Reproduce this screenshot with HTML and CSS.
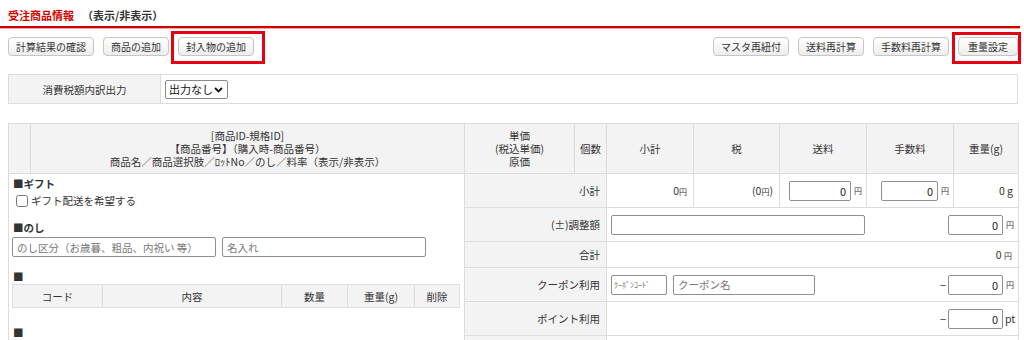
FILE: index.html
```html
<!DOCTYPE html>
<html lang="ja">
<head>
<meta charset="utf-8">
<link rel="stylesheet" href="styles.css">
</head>
<body>
<div class="title"><span class="t-red">受注商品情報</span><span class="t-toggle">（表示/非表示）</span></div>
<div class="page">
  <div class="toolbar">
    <div class="btn-group">
      <button class="btn">計算結果の確認</button>
      <button class="btn">商品の追加</button>
      <span class="mark mark-l"><button class="btn">封入物の追加</button></span>
    </div>
    <div class="btn-group">
      <button class="btn">マスタ再紐付</button>
      <button class="btn">送料再計算</button>
      <button class="btn">手数料再計算</button>
      <span class="mark mark-r"><button class="btn btn-wide">重量設定</button></span>
    </div>
  </div>

  <table class="tax">
    <tr>
      <td class="tax-label">消費税額内訳出力</td>
      <td class="tax-val">
        <span class="sel"><select><option>出力なし</option></select><svg class="chev" width="9" height="6" viewBox="0 0 9 6"><polyline points="1,1 4.5,4.5 8,1" fill="none" stroke="#111" stroke-width="1.8"/></svg></span>
      </td>
    </tr>
  </table>

  <table class="items">
    <colgroup>
      <col class="c-a"><col class="c-b"><col class="c-c"><col class="c-d"><col class="c-e"><col class="c-f"><col class="c-g"><col class="c-h"><col class="c-i">
    </colgroup>
    <tr class="head">
      <th></th>
      <th>[商品ID-規格ID]<br>【商品番号】（購入時-商品番号）<br>商品名／商品選択肢／ﾛｯﾄNo／のし／料率（表示/非表示）</th>
      <th>単価<br>(税込単価)<br>原価</th>
      <th>個数</th>
      <th>小計</th>
      <th>税</th>
      <th>送料</th>
      <th>手数料</th>
      <th>重量(g)</th>
    </tr>
    <tr class="r1">
      <td class="left" colspan="2" rowspan="6">
        <div class="sec-h">■ギフト</div>
        <label class="chk"><input type="checkbox">ギフト配送を希望する</label>
        <div class="sec-h noshi">■のし</div>
        <div class="noshi-inputs"><input class="txt w1" placeholder="のし区分（お歳暮、粗品、内祝い 等）"><input class="txt w1" placeholder="名入れ"></div>
        <div class="sec-h sq1">■</div>
        <table class="sub">
          <colgroup><col class="s1"><col class="s2"><col class="s3"><col class="s4"><col class="s5"></colgroup>
          <tr><th>コード</th><th>内容</th><th>数量</th><th>重量(g)</th><th>削除</th></tr>
        </table>
        <div class="sec-h sq2">■</div>
        <table class="sub">
          <colgroup><col class="s1"><col class="s2"><col class="s3"><col class="s4"><col class="s5"></colgroup>
          <tr><th>コード</th><th>内容</th><th>数量</th><th>重量(g)</th><th>削除</th></tr>
        </table>
      </td>
      <td class="lbl" colspan="2">小計</td>
      <td class="num">0<span class="yen">円</span></td>
      <td class="num">(0<span class="yen">円</span>)</td>
      <td class="fee"><div class="fee-in"><input class="txt amt w62" value="0"><span class="unit">円</span></div></td>
      <td class="fee"><div class="fee-in"><input class="txt amt w57" value="0"><span class="unit">円</span></div></td>
      <td class="num g">0 g</td>
    </tr>
    <tr class="r2">
      <td class="lbl" colspan="2">(±)調整額</td>
      <td class="wide" colspan="5">
        <div class="line">
          <input class="txt adj">
          <div class="rgt"><input class="txt amt w55" value="0"><span class="unit">円</span></div>
        </div>
      </td>
    </tr>
    <tr class="r3">
      <td class="lbl" colspan="2">合計</td>
      <td class="wide total" colspan="5">0 <span class="yen">円</span></td>
    </tr>
    <tr class="r4">
      <td class="lbl" colspan="2">クーポン利用</td>
      <td class="wide" colspan="5">
        <div class="line">
          <div class="cp"><input class="txt code" placeholder="ｸｰﾎﾟﾝｺｰﾄﾞ"><input class="txt cname" placeholder="クーポン名"></div>
          <div class="rgt"><span class="minus">−</span><input class="txt amt w55" value="0"><span class="unit">円</span></div>
        </div>
      </td>
    </tr>
    <tr class="r5">
      <td class="lbl" colspan="2">ポイント利用</td>
      <td class="wide" colspan="5">
        <div class="line">
          <span></span>
          <div class="rgt"><span class="minus">−</span><input class="txt amt w55" value="0"><span class="unit pt">pt</span></div>
        </div>
      </td>
    </tr>
    <tr class="r6">
      <td class="lbl" colspan="2"></td>
      <td class="wide" colspan="5"></td>
    </tr>
  </table>
</div>
</body>
</html>
```
FILE: styles.css
```css
* { box-sizing: border-box; }
body {
  margin: 0;
  background: #fff;
  color: #333;
  font-family: "Noto Sans CJK JP", "Noto Sans", sans-serif;
  font-size: 10.5px;
}
.title {
  width: 1020px;
  padding: 8px 0 4px 8px;
  line-height: 14px;
  font-size: 11px;
  font-weight: bold;
  border-bottom: 2px solid #cc0000;
  box-shadow: 0 1px 0 #f2a3a3;
}
.t-red { color: #d40000; }
.t-toggle { margin-left: 8px; color: #333; }

.page { padding: 0 6px 0 8px; width: 1024px; }

.toolbar {
  display: flex;
  justify-content: space-between;
  margin-top: 9px;
  width: 1010px;
}
.btn-group { display: flex; gap: 9px; }
.btn {
  height: 19px;
  padding: 0 7px;
  margin: 0;
  font-family: "Noto Sans CJK JP", sans-serif;
  font-size: 10px;
  line-height: 17px;
  color: #333;
  border: 1px solid #c6c6c6;
  border-radius: 4px;
  background: linear-gradient(#ffffff, #ededed);
}
.btn-wide { padding: 0 9px; }
.mark { position: relative; display: inline-flex; }
.mark::after {
  content: "";
  position: absolute;
  border: 3px solid #e50012;
  pointer-events: none;
}
.mark-l::after { left: -7px; right: -11px; top: -6px; bottom: -8px; }
.mark-r::after { left: -6px; right: -3px; top: -5px; bottom: -8px; }

.tax {
  margin-top: 18px;
  width: 1010px;
  border-collapse: collapse;
}
.tax td { border: 1px solid #dcdcdc; height: 29px; padding: 0; }
.tax-label { width: 152px; background: #f3f3f3; text-align: center; }
.tax-val { padding-left: 4px !important; }
.sel { position: relative; display: inline-block; vertical-align: middle; }
.sel select {
  appearance: none;
  -webkit-appearance: none;
  width: 63px;
  height: 19px;
  padding: 0 0 0 3px;
  font-family: "Noto Sans CJK JP", sans-serif;
  font-size: 11px;
  color: #111;
  background: #fff;
  border: 1px solid #8a8a8a;
  border-radius: 2px;
}
.chev { position: absolute; right: 5px; top: 7px; pointer-events: none; }

.items {
  margin-top: 19px;
  width: 1010px;
  border-collapse: collapse;
  table-layout: fixed;
}
.c-a { width: 22px; } .c-b { width: 434px; } .c-c { width: 110px; }
.c-d { width: 32px; } .c-e { width: 87px; } .c-f { width: 86px; }
.c-g { width: 87px; } .c-h { width: 87px; } .c-i { width: 65px; }

.items th, .items td { border: 1px solid #dcdcdc; padding: 0; }
.items th {
  background: #f3f3f3;
  font-weight: normal;
  line-height: 13px;
  text-align: center;
  vertical-align: middle;
}
.head { height: 50px; }
.r1, .r2, .r4, .r5 { height: 34px; }
.r3 { height: 26px; }
.r6 { height: 60px; }

.left { vertical-align: top; padding: 3px 4px 0 3px !important; background: #fff; }
.sec-h { font-weight: bold; line-height: 14px; padding-left: 1px; }
.chk { display: flex; align-items: center; margin-top: 3px; line-height: 14px; }
.chk input { width: 12px; height: 12px; margin: 0 3px 0 4px; }
.noshi { margin-top: 13px; }
.noshi-inputs { display: flex; gap: 6px; margin-top: 2px; }
.txt {
  height: 20px;
  border: 1px solid #8f8f8f;
  border-radius: 2px;
  font-family: "Noto Sans CJK JP", sans-serif;
  font-size: 10.5px;
  color: #222;
  padding: 0 4px;
  background: #fff;
}
.txt::placeholder { color: #777; }
.w1 { width: 204px; }
.sq1 { margin-top: 13px; }
.sq2 { margin-top: 18px; }
.sub { width: 447px; border-collapse: collapse; table-layout: fixed; }
.sub th { height: 23px; }
.s1 { width: 90px; } .s2 { width: 179px; } .s3 { width: 66px; } .s4 { width: 67px; } .s5 { width: 45px; }

.lbl { background: #f3f3f3; text-align: right; padding-right: 6px !important; }
.num { text-align: right; padding-right: 6px !important; }
.num.g { padding-right: 5px !important; }
.yen { font-size: 8px; }
.fee { padding-right: 1px !important; }
.fee-in { display: flex; justify-content: flex-end; align-items: center; }
.unit { width: 12px; margin-left: 2px; font-size: 8px; text-align: left; padding-left: 1px; }
.unit.pt { font-size: 10.5px; padding-left: 0; }
.amt { text-align: right; padding-right: 4px; font-size: 11px; }
.w62 { width: 62px; }
.w57 { width: 57px; }
.w55 { width: 55px; }
.wide { padding: 0 1px 0 4px !important; }
.line { display: flex; justify-content: space-between; align-items: center; }
.adj { width: 254px; }
.rgt { display: flex; align-items: center; }
.minus { margin-right: 2px; font-size: 11px; }
.total { text-align: right; padding-right: 6px !important; }
.cp { display: flex; gap: 6px; }
.code { width: 56px; font-size: 8px; padding: 0 2px; }
.cname { width: 142px; }
```
